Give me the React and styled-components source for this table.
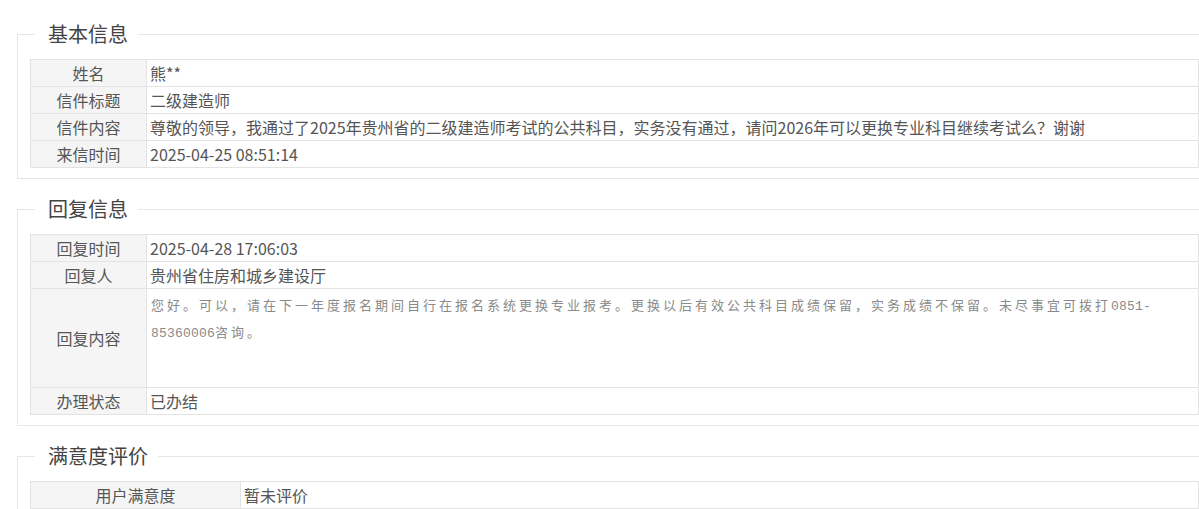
import React from 'react'
import styled, { createGlobalStyle } from 'styled-components'

const GlobalStyle = createGlobalStyle`
  html, body {
    margin: 0;
    padding: 0;
    background: #fff;
    overflow: hidden;
  }
  body {
    font-family: "Microsoft YaHei", "Noto Sans CJK SC", sans-serif;
    color: #555;
  }
`

const Page = styled.div`
  padding: 20px 0 0 17px;
  width: 1195px;
`

const Section = styled.fieldset`
  box-sizing: border-box;
  width: 1195px;
  margin: 0 0 16px 0;
  padding: 0 12px 10px 12px;
  border: 1px solid #e6e6e6;
  min-width: 0;
`

const Legend = styled.legend`
  margin-left: 5px;
  padding: 0 10px 0 13px;
  font-size: 20px;
  line-height: 28px;
  color: #444;
  font-weight: normal;
`

const Table = styled.table`
  width: 100%;
  margin-top: 11px;
  border-collapse: collapse;
  font-size: 16px;
  line-height: 26px;
`

const Label = styled.td`
  width: ${(p) => p.$width}px;
  box-sizing: border-box;
  padding: 0;
  border: 1px solid #e3e3e3;
  background: #f5f5f5;
  color: #555;
  text-align: center;
  vertical-align: middle;
  white-space: nowrap;
`

const Value = styled.td`
  padding: 0 3px;
  border: 1px solid #e3e3e3;
  color: #555;
  vertical-align: top;
  white-space: nowrap;
`

const ReplyBody = styled.div`
  height: 96px;
  padding: 2px 0 0 1px;
  font-family: "Noto Sans CJK SC", sans-serif;
  font-size: 13px;
  line-height: 27px;
  letter-spacing: 3px;
  color: #8a8a8a;
  white-space: nowrap;
`

const Digits = styled.span`
  font-family: "Liberation Mono", monospace;
  letter-spacing: 0.2px;
  line-height: 1;
`

const Row = ({ label, width = 116, children }) => (
  <tr>
    <Label $width={width}>{label}</Label>
    <Value>{children}</Value>
  </tr>
)

export default function App() {
  return (
    <>
      <GlobalStyle />
      <Page>
        <Section>
          <Legend>基本信息</Legend>
          <Table>
            <tbody>
              <Row label="姓名">熊**</Row>
              <Row label="信件标题">二级建造师</Row>
              <Row label="信件内容">
                尊敬的领导，我通过了2025年贵州省的二级建造师考试的公共科目，实务没有通过，请问2026年可以更换专业科目继续考试么？谢谢
              </Row>
              <Row label="来信时间">2025-04-25 08:51:14</Row>
            </tbody>
          </Table>
        </Section>

        <Section>
          <Legend>回复信息</Legend>
          <Table>
            <tbody>
              <Row label="回复时间">2025-04-28 17:06:03</Row>
              <Row label="回复人">贵州省住房和城乡建设厅</Row>
              <Row label="回复内容">
                <ReplyBody>
                  您好。可以，请在下一年度报名期间自行在报名系统更换专业报考。更换以后有效公共科目成绩保留，实务成绩不保留。未尽事宜可拨打<Digits>0851-</Digits>
                  <br />
                  <Digits>85360006</Digits>咨询。
                </ReplyBody>
              </Row>
              <Row label="办理状态">已办结</Row>
            </tbody>
          </Table>
        </Section>

        <Section>
          <Legend>满意度评价</Legend>
          <Table>
            <tbody>
              <Row label="用户满意度" width={210}>暂未评价</Row>
            </tbody>
          </Table>
        </Section>
      </Page>
    </>
  )
}
